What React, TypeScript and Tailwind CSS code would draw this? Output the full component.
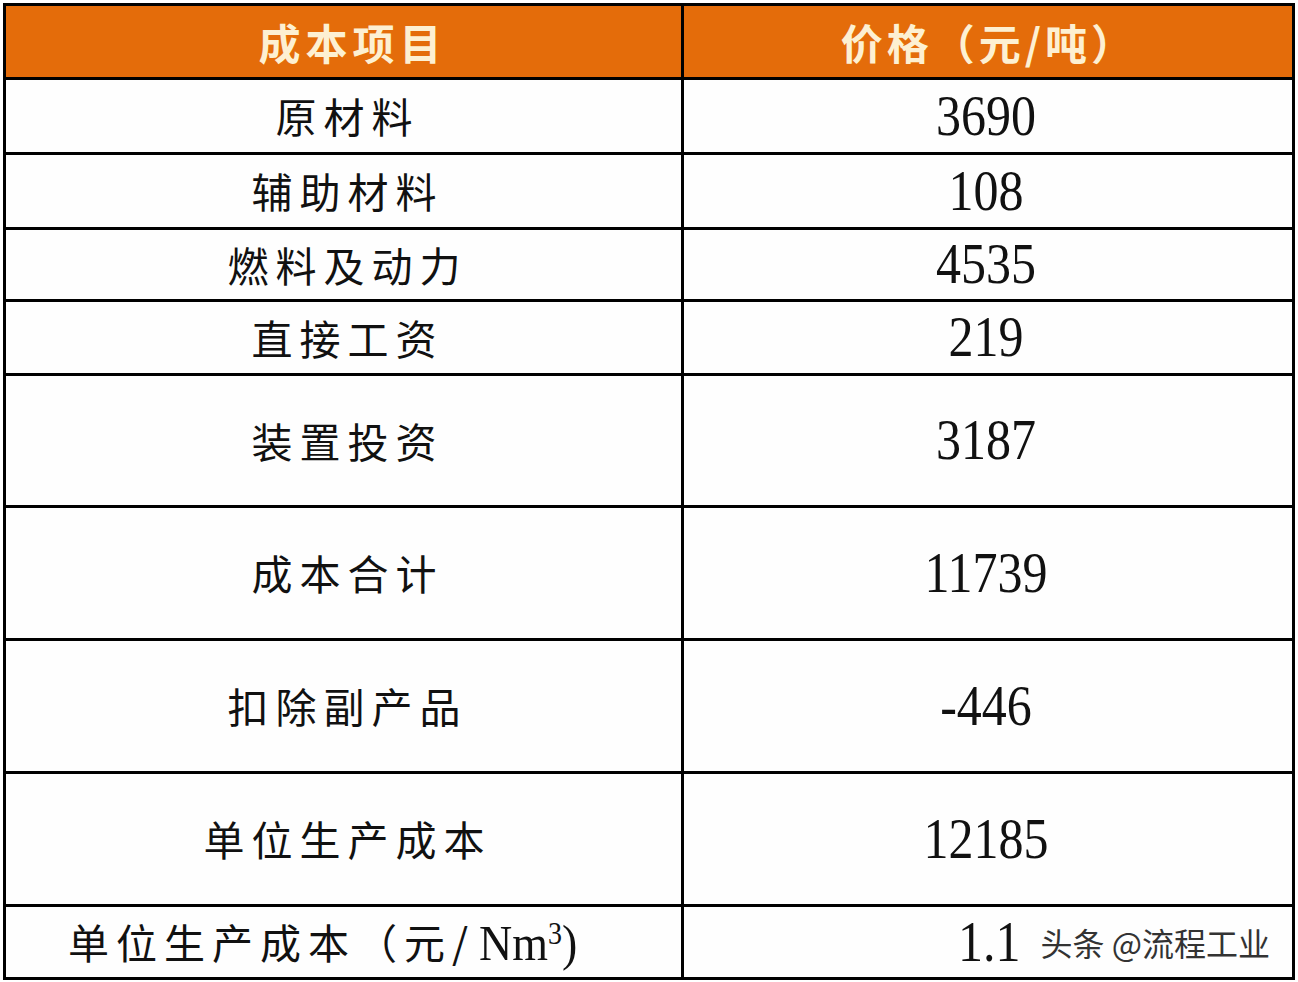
import React from 'react';

const rows = [
  { name: '原材料', price: '3690', h: 'h-[75px]' },
  { name: '辅助材料', price: '108', h: 'h-[75px]' },
  { name: '燃料及动力', price: '4535', h: 'h-[72px]' },
  { name: '直接工资', price: '219', h: 'h-[74px]' },
  { name: '装置投资', price: '3187', h: 'h-[132px]' },
  { name: '成本合计', price: '11739', h: 'h-[133px]' },
  { name: '扣除副产品', price: '-446', h: 'h-[133px]' },
  { name: '单位生产成本', price: '12185', h: 'h-[133px]' },
];

const cjk = "font-['Noto_Sans_CJK_SC',sans-serif]";
const serif = "font-['Liberation_Serif','Noto_Sans_CJK_SC',serif]";

export default function App() {
  return (
    <div className="w-[1298px] h-[982px] bg-white pt-[3px] pl-[3px]">
      <div className="w-[1292px] border-[3px] border-black bg-[#fefefe]">
        {/* header */}
        <div className="flex h-[74px] border-b-[3px] border-black bg-[#e46c0a]">
          <div className={`w-[678px] border-r-[3px] border-black flex items-center justify-center pl-[18px] text-[42px] font-bold tracking-[5px] text-[#fdf0d2] ${cjk}`}>
            成本项目
          </div>
          <div className={`flex-1 flex items-center justify-center pl-[2px] text-[42px] font-bold tracking-[4px] text-[#fdf0d2] ${cjk}`}>
            价格（元/吨）
          </div>
        </div>

        {rows.map((r) => (
          <div key={r.name} className={`flex ${r.h} border-b-[3px] border-black`}>
            <div className={`w-[678px] border-r-[3px] border-black flex items-center justify-center pl-[8px] text-[41px] tracking-[7px] text-[#111] ${cjk}`}>
              {r.name}
            </div>
            <div className={`flex-1 flex items-center justify-center pr-[4px] text-[50px] text-[#111] ${serif}`}>
              <span className="scale-y-[1.12]">{r.price}</span>
            </div>
          </div>
        ))}

        {/* last row */}
        <div className="flex h-[70px]">
          <div className={`w-[678px] border-r-[3px] border-black flex items-center pl-[62px] text-[41px] tracking-[7px] text-[#111] ${cjk}`}>
            单位生产成本（元/
            <span className={`${serif} tracking-normal text-[46px] ml-[4px] scale-y-[1.1]`}>
              Nm<sup className="text-[28px]">3</sup>)
            </span>
          </div>
          <div className="flex-1 flex items-center justify-end pr-[22px]">
            <span className={`text-[50px] text-[#111] scale-y-[1.12] ${serif}`}>1.1</span>
            <span className={`ml-[20px] text-[32px] text-[#333] ${cjk} [text-shadow:0_0_2px_#fff,0_0_2px_#fff]`}>
              头条 @流程工业
            </span>
          </div>
        </div>
      </div>
    </div>
  );
}
